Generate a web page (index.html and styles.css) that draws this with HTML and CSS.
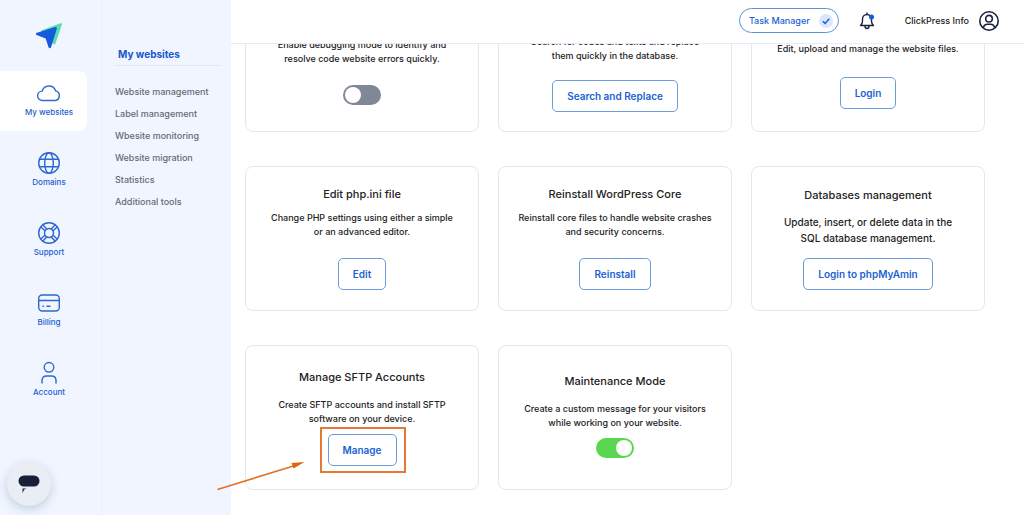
FILE: index.html
```html
<!DOCTYPE html>
<html lang="en">
	<head>
		<meta charset="utf-8">
		<title>My websites</title>
		<link rel="stylesheet" href="styles.css">
	</head>

	<body>
		<div class="page">
			<nav class="sidebar">
				<a class="logo" href="#" aria-label="ClickPress">
					<svg width="28" height="28" viewBox="0 0 28 28">
						<path d="M6 8.500L25.500 1.200Q27.300 0.800 26.900 2.600L20.500 21.500Q19.600 23.200 18 21.800L14 15Z" fill="#56dfb0"/>
						<path d="M1.200 11Q0.400 12.300 1.600 13.100L10.700 16.400L13.500 25.300Q14.700 27 16 25.400L21.900 6.500Q22 4.700 20.200 4.900Z" fill="#1559dc"/>
					</svg>
				</a>

				<a class="navItem active" href="#">
					<svg width="26" height="24" viewBox="0 0 26 24">
						<path d="M6.500 19.500a4.700 4.700 0 0 1-.3-9.400 7 7 0 0 1 13.400-.2 4.900 4.900 0 0 1-.4 9.600z"/>
					</svg>
					<span>My websites</span>
				</a>
				<a class="navItem" href="#">
					<svg width="24" height="24" viewBox="0 0 24 24">
						<circle cx="12" cy="12" r="10.300"/>
						<ellipse cx="12" cy="12" rx="4.300" ry="10.300"/>
						<path d="M2.500 8.200h19M2.500 15.800h19"/>
					</svg>
					<span>Domains</span>
				</a>
				<a class="navItem" href="#">
					<svg width="24" height="24" viewBox="0 0 24 24">
						<circle cx="12" cy="12" r="10.300"/>
						<circle cx="12" cy="12" r="4.500"/>
						<path d="M3.900 5.900l4 3.900M5.900 3.900l3.900 4M20.100 5.900l-4 3.900M18.100 3.900l-3.900 4M3.900 18.100l4-3.900M5.900 20.100l3.900-4M20.100 18.100l-4-3.900M18.100 20.100l-3.900-4"/>
					</svg>
					<span>Support</span>
				</a>
				<a class="navItem" href="#">
					<svg width="24" height="24" viewBox="0 0 24 24">
						<rect x="1.700" y="4" width="20.600" height="16" rx="3.500"/>
						<path d="M1.700 9.500h20.600M6 15.300h.5M10 15.300h3"/>
					</svg>
					<span>Billing</span>
				</a>
				<a class="navItem" href="#">
					<svg width="24" height="24" viewBox="0 0 24 24">
						<circle cx="12" cy="6.300" r="4.800"/>
						<path d="M5 22v-2.500q0-4.500 4.500-4.500h5q4.500 0 4.500 4.500V22"/>
					</svg>
					<span>Account</span>
				</a>

				<button class="chat" type="button" aria-label="Chat">
					<svg width="22" height="18" viewBox="0 0 22 18">
						<rect x="0.500" y="0.500" width="21" height="11" rx="5.500" fill="#172037"/>
						<path d="M4.500 13.500h4q-3 .500-3.500 4h-.500z" fill="#172037"/>
					</svg>
				</button>
			</nav>

			<aside class="submenu">
				<h2>My websites</h2>
				<ul>
					<li><a href="#">Website management</a></li>
					<li><a href="#">Label management</a></li>
					<li><a href="#">Wbesite monitoring</a></li>
					<li><a href="#">Website migration</a></li>
					<li><a href="#">Statistics</a></li>
					<li><a href="#">Additional tools</a></li>
				</ul>
			</aside>

			<main class="main">
				<header class="topbar">
					<button class="taskManager" type="button">
						Task Manager
						<svg width="14" height="14" viewBox="0 0 14 14">
							<circle cx="7" cy="7" r="7" fill="#dbe7fd"/>
							<path d="M3.800 7.200l2.300 2.200 4.200-4.600" fill="none" stroke="#1b62d3" stroke-width="1.500"/>
						</svg>
					</button>
					<button class="bell" type="button" aria-label="Notifications">
						<svg width="16" height="18" viewBox="0 0 16 18">
							<path d="M1.500 13.500q2-1.500 2-4.500V7a4.500 4.500 0 0 1 9 0v2q0 3 2 4.500zM6 14q0 2.500 2 2.500t2-2.500M8 2.500V1" fill="none" stroke="#1c2340" stroke-width="1.400" stroke-linejoin="round" stroke-linecap="round"/>
							<circle cx="12.500" cy="5" r="2.500" fill="#1559dc"/>
						</svg>
					</button>
					<a class="user" href="#">
						ClickPress Info
						<svg width="20" height="20" viewBox="0 0 20 20">
							<circle cx="10" cy="10" r="9.200"/>
							<circle cx="10" cy="7.700" r="3.300"/>
							<path d="M4.200 16.800q1-3.500 4-3.500h3.600q3 0 4 3.500"/>
						</svg>
					</a>
				</header>

				<div class="cards">
					<section class="card cut">
						<p>Enable debugging mode to identify and<br>resolve code website errors quickly.</p>
						<input class="toggle" type="checkbox" aria-label="Debugging mode">
					</section>
					<section class="card cut search">
						<p>Search for codes and texts and replace<br>them quickly in the database.</p>
						<button class="btn" type="button">Search and Replace</button>
					</section>
					<section class="card cut files">
						<p>Edit, upload and manage the website files.</p>
						<button class="btn" type="button">Login</button>
					</section>

					<section class="card">
						<h3>Edit php.ini file</h3>
						<p>Change PHP settings using either a simple<br>or an advanced editor.</p>
						<button class="btn" type="button">Edit</button>
					</section>
					<section class="card">
						<h3>Reinstall WordPress Core</h3>
						<p>Reinstall core files to handle website crashes<br>and security concerns.</p>
						<button class="btn" type="button">Reinstall</button>
					</section>
					<section class="card large">
						<h3>Databases management</h3>
						<p>Update, insert, or delete data in the<br>SQL database management.</p>
						<button class="btn" type="button">Login to phpMyAmin</button>
					</section>

					<section class="card tight">
						<h3>Manage SFTP Accounts</h3>
						<p>Create SFTP accounts and install SFTP<br>software on your device.</p>
						<div class="highlight">
							<button class="btn" type="button">Manage</button>
							<svg class="arrow" width="88" height="30" viewBox="0 0 88 30">
								<path d="M0.500 28.500L78 4.500" stroke="#e0702a" stroke-width="1.600"/>
								<path d="M87.500 1L74.500 2L76.500 7.500Z" fill="#e0640f"/>
							</svg>
						</div>
					</section>
					<section class="card tight">
						<h3>Maintenance Mode</h3>
						<p>Create a custom message for your visitors<br>while working on your website.</p>
						<input class="toggle" type="checkbox" aria-label="Maintenance Mode" checked>
					</section>
				</div>
			</main>
		</div>
	</body>
</html>
```
FILE: styles.css
```css
* {
	box-sizing: border-box;
}

body {
	margin: 0;
	background-color: #fff;
	color: #222;
	font-family: Inter, "Liberation Sans", sans-serif;
	font-size: 9px;
	font-weight: 500;
}

a {
	color: inherit;
	text-decoration: none;
}

button {
	font: inherit;
	cursor: pointer;
}

.page {
	display: flex;
	height: 100vh;
	overflow: hidden;
}

/* left icon bar */
.sidebar {
	position: relative;
	flex: none;
	width: 102px;
	background-color: #f0f5ff;
	border-right: 1px solid #ebf0fb;
	display: flex;
	flex-direction: column;
	gap: 10px;
}

.logo {
	height: 61px;
	padding: 22px 0 0 35px;
}

.navItem {
	width: 87px;
	height: 60px;
	padding: 10px 0 0 11px;
	border-radius: 0 8px 8px 0;
	display: flex;
	flex-direction: column;
	align-items: center;
	gap: 1px;
	flex: none;
	color: #1d5fcf;
	font-size: 8px;
	line-height: 12px;
}

.navItem.active {
	background-color: #fff;
}

.navItem svg {
	fill: none;
	stroke: #2c68cf;
	stroke-width: 1.4;
	stroke-linecap: round;
}

.chat {
	position: absolute;
	left: 7px;
	bottom: 9px;
	width: 44px;
	height: 44px;
	padding: 0;
	border: 0;
	border-radius: 50%;
	background-color: #e9edf4;
	box-shadow: 0 3px 10px rgba(60, 90, 130, 0.25);
	display: flex;
	align-items: center;
	justify-content: center;
}

/* second column */
.submenu {
	flex: none;
	width: 129px;
	padding: 44px 10px 0 13px;
	background-color: #f0f5ff;
}

.submenu h2 {
	margin: 0;
	padding: 0 3px;
	height: 22px;
	border-bottom: 1px solid #dfe5f3;
	color: #1758cc;
	font-size: 10px;
	font-weight: 700;
	line-height: 20px;
}

.submenu ul {
	margin: 15px 0 0;
	padding: 0;
	list-style: none;
	color: #666a73;
	line-height: 22px;
	white-space: nowrap;
}

/* content */
.main {
	flex: 1;
	min-width: 0;
}

.topbar {
	position: relative;
	z-index: 1;
	height: 44px;
	padding: 0 25px 2px 0;
	background-color: #fff;
	border-bottom: 1px solid #e6eafb;
	display: flex;
	align-items: center;
	justify-content: flex-end;
}

.taskManager {
	height: 25px;
	padding: 0 5px 0 9px;
	border: 1px solid #5c93d6;
	border-radius: 13px;
	background-color: #fff;
	color: #1b62d3;
	display: flex;
	align-items: center;
	gap: 9px;
}

.bell {
	margin: 0 30px 0 20px;
	padding: 0;
	border: 0;
	background: none;
	display: flex;
}

.user {
	display: flex;
	align-items: center;
	gap: 10px;
}

.user svg {
	fill: none;
	stroke: #1c2340;
	stroke-width: 1.6;
}

.cards {
	margin-top: -57px;
	padding: 0 39px 0 14px;
	display: grid;
	grid-template-columns: repeat(3, 1fr);
	gap: 34px 19px;
}

.card {
	min-height: 145px;
	padding-bottom: 2px;
	border: 1px solid #e6e7ec;
	border-radius: 8px;
	display: flex;
	flex-direction: column;
	align-items: center;
	justify-content: center;
	text-align: center;
	white-space: nowrap;
}

.card h3 {
	margin: 0 0 8px;
	font-size: 11px;
	font-weight: 500;
	line-height: 18px;
}

.card p {
	margin: 0 0 19px;
	line-height: 14px;
}

.card.cut {
	justify-content: flex-end;
	padding-bottom: 22px;
}

.card.search {
	padding-bottom: 19px;
}

.card.search p {
	margin-bottom: 17px;
}

.card.files p {
	margin-bottom: 21px;
}

.card.large h3 {
	margin-bottom: 10px;
}

.card.large p {
	margin-bottom: 12px;
	font-size: 10px;
	line-height: 16px;
}

.card.tight h3 {
	margin-bottom: 12px;
}

.card.tight p {
	margin-bottom: 8px;
}

.btn {
	height: 32px;
	padding: 0 14px;
	border: 1px solid #6c9ddb;
	border-radius: 5px;
	background-color: #fff;
	color: #1b62d3;
	font-size: 10px;
	font-weight: 600;
}

.toggle {
	appearance: none;
	width: 38px;
	height: 20px;
	margin: 0 0 4px;
	padding: 2px;
	border-radius: 10px;
	background-color: #808797;
	display: flex;
	cursor: pointer;
}

.toggle::before {
	content: "";
	width: 16px;
	height: 16px;
	border-radius: 50%;
	background-color: #fff;
}

.toggle:checked {
	justify-content: flex-end;
	background-color: #5bd651;
}

/* orange frame and arrow over the button */
.highlight {
	position: relative;
}

.highlight::after {
	content: "";
	position: absolute;
	inset: -7px -9px -7px -8px;
	border: 2px solid #e27a35;
	pointer-events: none;
}

.arrow {
	position: absolute;
	right: calc(100% + 23px);
	top: 27px;
}
```
